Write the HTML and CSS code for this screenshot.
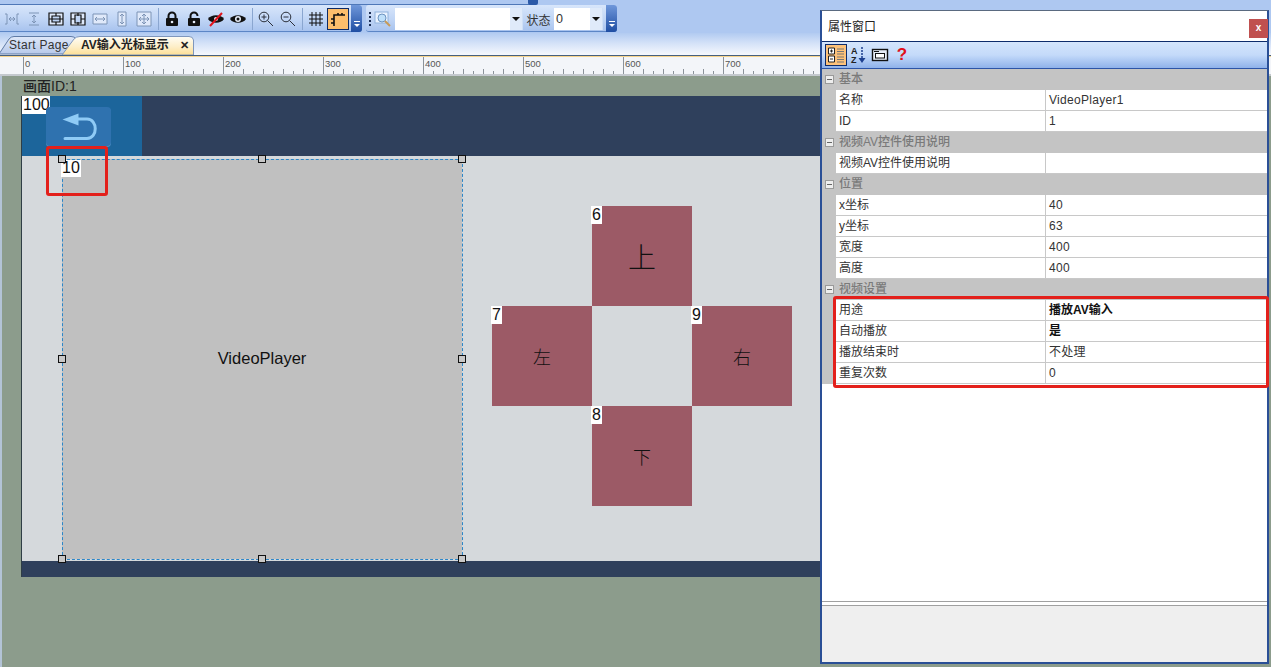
FILE: index.html
```html
<!DOCTYPE html>
<html lang="zh-CN">
<head>
<meta charset="utf-8">
<title>AV输入光标显示</title>
<link rel="stylesheet" href="styles.css">
</head>
<body>
<div class="app">
  <header class="toolbars">
    <div class="stub"><i class="stub-end"></i></div>
    <div class="bars">
      <div class="bar bar-main">
        <span class="slot"><svg class="ic faded" viewBox="0 0 16 16"><path d="M1 3h2v10H1M15 3h-2v10h2M5 8h6M5 8l2-2M5 8l2 2M11 8L9 6M11 8l-2 2"/></svg></span>
        <span class="slot"><svg class="ic faded" viewBox="0 0 16 16"><path d="M3 2h10M3 14h10M8 4v8M8 4L6 6M8 4l2 2M8 12l-2-2M8 12l2-2"/></svg></span>
        <span class="slot"><svg class="ic dark filled" viewBox="0 0 16 16"><path d="M1 2h14v12H1zM1 8h3M12 8h3M4 5h8v6H4zM8 2v3M8 11v3M4 8h8"/></svg></span>
        <span class="slot"><svg class="ic dark filled" viewBox="0 0 16 16"><path d="M1 2h14v12H1zM8 2v3M8 11v3M5 4v8h6V4zM1 8h4M11 8h4"/></svg></span>
        <span class="slot"><svg class="ic faded filled" viewBox="0 0 16 16"><path d="M1 3h14v10H1zM3 8h10M3 8l2-2M3 8l2 2M13 8l-2-2M13 8l-2 2"/></svg></span>
        <span class="slot"><svg class="ic faded filled" viewBox="0 0 16 16"><path d="M4 1h8v14H4zM8 3v10M8 3L6 5M8 3l2 2M8 13l-2-2M8 13l2-2"/></svg></span>
        <span class="slot"><svg class="ic faded filled" viewBox="0 0 16 16"><path d="M1 1h14v14H1zM8 3v10M3 8h10M8 3L6 5M8 3l2 2M8 13l-2-2M8 13l2-2M3 8l2-2M3 8l2 2M13 8l-2-2M13 8l-2 2"/></svg></span>
        <span class="sep"></span>
        <span class="slot"><svg class="ic solid" viewBox="0 0 16 16"><path class="hollow" d="M4.500 8V5a3.500 3.500 0 0 1 7 0v3"/><rect x="2" y="7" width="12" height="8" rx="1"/><circle class="pin" cx="8" cy="11" r="1.300"/></svg></span>
        <span class="slot"><svg class="ic solid" viewBox="0 0 16 16"><path class="hollow" d="M4.500 8V5a3.500 3.500 0 0 1 7 0"/><rect x="2" y="7" width="12" height="8" rx="1"/><circle class="pin" cx="8" cy="11" r="1.300"/></svg></span>
        <span class="slot"><svg class="ic solid" viewBox="0 0 16 16"><path d="M0 8c3-5 13-5 16 0-3 5-13 5-16 0z"/><circle class="pin" cx="8" cy="8" r="2"/><path class="slash" d="M2 15L14 2"/></svg></span>
        <span class="slot"><svg class="ic solid" viewBox="0 0 16 16"><path d="M0 8c3-5 13-5 16 0-3 5-13 5-16 0z"/><circle class="pin" cx="8" cy="8" r="3"/><circle cx="8" cy="8" r="1.500"/></svg></span>
        <span class="sep"></span>
        <span class="slot"><svg class="ic lens" viewBox="0 0 16 16"><circle cx="6" cy="6" r="4.800"/><path d="M3.500 6h5M6 3.500v5M9.500 9.500l5.500 5.500"/></svg></span>
        <span class="slot"><svg class="ic lens" viewBox="0 0 16 16"><circle cx="6" cy="6" r="4.800"/><path d="M3.500 6h5M9.500 9.500l5.500 5.500"/></svg></span>
        <span class="sep"></span>
        <span class="slot"><svg class="ic dark" viewBox="0 0 16 16"><path d="M4 1v14M8 1v14M12 1v14M1 4h14M1 8h14M1 12h14"/></svg></span>
        <span class="slot slot-on"><svg class="ic dark" viewBox="0 0 16 16"><path class="snap" d="M4 15V4h11M4 8H1M4 12H1M8 4V2M12 4V2"/></svg></span>
        <span class="chev"><i></i></span>
      </div>
      <div class="bar bar-find">
        <span class="grip"></span>
        <svg class="find-ic" viewBox="0 0 18 18"><rect x="1" y="2" width="13" height="11" fill="#eaf3ff" stroke="#8fb2dc"/><circle cx="8" cy="8" r="4" fill="#bfe0fa" stroke="#6d93c0"/><path d="M11 11l5 5" stroke="#c79a58" stroke-width="2"/></svg>
        <span class="combo combo-wide"><i class="drop"></i></span>
        <span class="state-label">状态</span>
        <span class="combo combo-state"><span class="combo-val">0</span><i class="drop"></i></span>
        <span class="chev chev-find"><i></i></span>
      </div>
    </div>
  </header>

  <nav class="tabs">
    <span class="tab tab-start">
      <svg class="tab-shape" viewBox="0 0 78 19"><defs><linearGradient id="tabBlue" x1="0" y1="0" x2="0" y2="1"><stop offset="0" stop-color="#dfe8f9"/><stop offset="1" stop-color="#b7c9ea"/></linearGradient></defs><path d="M0 18L10 3Q12 .5 15 .5H72Q76 .5 77 3L66 18z" fill="url(#tabBlue)" stroke="#5f7ba6"/></svg>
      <span class="tab-text">Start Page</span>
    </span>
    <span class="tab tab-active">
      <svg class="tab-shape" viewBox="0 0 132 19"><defs><linearGradient id="tabGold" x1="0" y1="0" x2="0" y2="1"><stop offset="0" stop-color="#fffdf6"/><stop offset=".55" stop-color="#fdeec8"/><stop offset="1" stop-color="#fddf95"/></linearGradient></defs><path d="M0 19L12 3Q14 .5 18 .5H127Q131 .5 131.500 4V19z" fill="url(#tabGold)" stroke="#7f97bd"/></svg>
      <span class="tab-text">AV输入光标显示</span>
      <b class="tab-x">✕</b>
    </span>
  </nav>

  <div class="ruler">
    <span>0</span><span>100</span><span>200</span><span>300</span><span>400</span><span>500</span><span>600</span><span>700</span><span>800</span>
  </div>

  <main class="canvas">
    <div class="screen-label">画面ID:1</div>
    <section class="screen">
      <div class="head"><div class="head-blue"></div></div>
      <div class="foot"></div>
      <span class="tag tag-100">100</span>
      <div class="back">
        <svg viewBox="0 0 38 30" class="back-ic"><path d="M18.500 1.500L2.500 7.500l16 6z" fill="#8fcbf6"/><path d="M17 7h10c11 0 11 19.500 0 19.500H5" fill="none" stroke="#8fcbf6" stroke-width="3" stroke-linecap="round"/></svg>
      </div>
      <div class="video">
        <span class="video-name">VideoPlayer</span>
        <span class="tag tag-10">10</span>
        <i class="h h-tl"></i><i class="h h-tc"></i><i class="h h-tr"></i>
        <i class="h h-ml"></i><i class="h h-mr"></i>
        <i class="h h-bl"></i><i class="h h-bc"></i><i class="h h-br"></i>
      </div>
      <div class="key key-up key-big"><span class="tag">6</span>上</div>
      <div class="key key-left"><span class="tag">7</span>左</div>
      <div class="key key-right"><span class="tag">9</span>右</div>
      <div class="key key-down"><span class="tag">8</span>下</div>
    </section>
    <div class="mark mark-canvas"></div>
  </main>

  <aside class="props">
    <div class="props-title"><span class="props-name">属性窗口</span><span class="close">x</span></div>
    <div class="props-tools">
      <span class="tool tool-on"><svg viewBox="0 0 18 18" class="tool-ic"><path d="M1.500 2h6v6h-6zM1.500 10h6v6h-6z" fill="#fff" stroke="#222"/><path d="M3 5h3M4.500 3.500v3M3 13h3" stroke="#222"/><path d="M10 3h7M10 5.500h7M10 8h7M10 11h7M10 13.500h7M10 16h7" stroke="#777"/></svg></span>
      <span class="tool"><svg viewBox="0 0 18 18" class="tool-ic"><text x="2" y="8" class="az">A</text><text x="2" y="17" class="az">Z</text><path d="M13 1v14" stroke="#1c3f8f" stroke-width="1.500" stroke-dasharray="2 1"/><path d="M9.500 12h7L13 17z" fill="#1c3f8f"/></svg></span>
      <span class="tool"><svg viewBox="0 0 18 18" class="tool-ic"><rect x="1.500" y="3.500" width="15" height="11" fill="#e8eef8" stroke="#111" stroke-width="1.400"/><rect x="4.500" y="7.500" width="9" height="4.500" fill="#fff" stroke="#111"/><path d="M3 5.500h5" stroke="#111"/></svg></span>
      <span class="tool help">?</span>
    </div>
    <div class="grid">
      <div class="group"><i class="minus"></i>基本</div>
      <div class="row"><span>名称</span><span class="val">VideoPlayer1</span></div>
      <div class="row"><span>ID</span><span class="val">1</span></div>
      <div class="group"><i class="minus"></i>视频AV控件使用说明</div>
      <div class="row"><span>视频AV控件使用说明</span><span class="val"></span></div>
      <div class="group"><i class="minus"></i>位置</div>
      <div class="row"><span>x坐标</span><span class="val">40</span></div>
      <div class="row"><span>y坐标</span><span class="val">63</span></div>
      <div class="row"><span>宽度</span><span class="val">400</span></div>
      <div class="row"><span>高度</span><span class="val">400</span></div>
      <div class="group"><i class="minus"></i>视频设置</div>
      <div class="row"><span>用途</span><span class="val strong">播放AV输入</span></div>
      <div class="row"><span>自动播放</span><span class="val strong">是</span></div>
      <div class="row"><span>播放结束时</span><span class="val">不处理</span></div>
      <div class="row"><span>重复次数</span><span class="val">0</span></div>
    </div>
    <div class="props-fill"></div>
    <div class="props-desc"></div>
  </aside>
  <div class="mark mark-props"></div>
</div>
</body>
</html>
```
FILE: styles.css
```css
* { box-sizing: border-box; }
html, body { margin: 0; height: 100%; overflow: hidden; }
body { font: 12px "Liberation Sans", "Noto Sans CJK SC", sans-serif; color: #222; }
.app { position: relative; width: 1271px; height: 667px; display: flex; flex-direction: column; overflow: hidden; background: #8c9c8c; }

/* top toolbars */
.toolbars { height: 33px; background: #aec8f1; flex: none; }
.stub { height: 5px; width: 530px; background: #aec8f1; border-bottom: 1px solid #4f78b8; position: relative; }
.stub-end { position: absolute; right: -8px; top: 0; width: 10px; height: 5px; background: #2c5aa8; border-radius: 0 0 2px 2px; }
.bars { display: flex; gap: 4px; height: 28px; }
.bar { display: flex; align-items: center; height: 27px; padding-top: 2px; background: linear-gradient(#d8e6fb, #c0d5f5 55%, #a8c3ee); border-bottom: 1px solid #5c86c6; border-radius: 0 3px 3px 0; }
.bar-main { width: 362px; padding-left: 1px; }
.bar-find { width: 251px; border-radius: 3px; padding-left: 3px; }
.slot { flex: none; width: 22px; height: 22px; display: flex; align-items: center; justify-content: center; }
.slot-on { background: #fdbe6c; border: 1px solid #0d2a66; }
.sep { flex: none; width: 6px; height: 22px; background: linear-gradient(#8aa6d0, #8aa6d0) center / 1px 100% no-repeat; }
.ic { width: 16px; height: 16px; fill: none; stroke-width: 1; }
.faded { stroke: #7d94b6; }
.dark { stroke: #111; }
.filled { fill: #dfe9fa; fill-rule: evenodd; stroke-width: 1.200; }
.faded.filled { stroke-width: 1; }
.lens { stroke: #2a2f3a; }
.snap { stroke-width: 1.600; }
.solid { fill: #111; stroke: none; }
.hollow { fill: none; stroke: #111; stroke-width: 2; }
.pin { fill: #e8eefa; }
.slash { stroke: #e0141c; stroke-width: 2; fill: none; }
.chev { margin: -2px 0 0 2px; flex: none; width: 11px; height: 27px; background: linear-gradient(#6f97da, #1f4ea3); border-radius: 0 3px 3px 0; position: relative; }
.chev i { position: absolute; left: 3px; bottom: 5px; width: 6px; height: 6px; border-top: 1px solid #fff; }
.chev i::after { content: ""; position: absolute; left: 0; top: 2px; border: 3px solid transparent; border-top-color: #fff; border-bottom: 0; }
.chev-find { margin-left: 3px; }
.grip { flex: none; width: 2px; height: 15px; margin-right: 3px; background: repeating-linear-gradient(#1d2f55 0 2px, transparent 2px 4px); }
.find-ic { flex: none; width: 18px; height: 18px; margin-right: 3px; }
.combo { flex: none; height: 22px; background: #fff; position: relative; display: block; }
.combo-wide { width: 128px; }
.combo-state { width: 49px; }
.combo-val { position: absolute; left: 2px; top: 4px; font-size: 12.500px; color: #333; }
.drop { position: absolute; right: 0; top: 0; width: 13px; height: 22px; background: #dfeafa; border-right: 1px solid #cfe0f6; }
.drop::after { content: ""; position: absolute; left: 2px; top: 9px; border: 4px solid transparent; border-top-color: #111; border-bottom: 0; }
.state-label { flex: none; width: 31px; text-align: center; color: #333; }

/* tabs */
.tabs { height: 23px; flex: none; display: flex; align-items: flex-end; background: linear-gradient(#b2cbf1, #d3e1f8 45%, #f6f8fd); border-bottom: 1px solid #46607f; position: relative; }
.tab { display: block; height: 19px; line-height: 18px; white-space: nowrap; position: relative; flex: none; }
.tab-shape { position: absolute; left: 0; top: 0; width: 100%; height: 19px; display: block; }
.tab-text { position: relative; }
.tab-start { width: 78px; margin-left: -1px; padding-left: 10px; color: #333; letter-spacing: .3px; }
.tab-active { width: 132px; margin-left: -15px; padding-left: 19px; font-weight: 700; color: #222; }
.tab-x { position: absolute; right: 5px; top: 0; font-size: 11px; font-weight: 700; }

/* ruler */
.ruler { height: 20px; flex: none; display: flex; padding-left: 23px; font-size: 9.500px; color: #555; border-top: 1px solid #f8d48c; border-bottom: 2px solid #c4c9ce; overflow: hidden;
  background-color: #f3f5f9;
  background-image:
    repeating-linear-gradient(90deg, #8b929a 0 1px, transparent 1px 100px),
    repeating-linear-gradient(90deg, #8b929a 0 1px, transparent 1px 20px),
    repeating-linear-gradient(90deg, #8b929a 0 1px, transparent 1px 10px);
  background-size: 100% 17px, 100% 5px, 100% 3px;
  background-position: 23px 0, 23px 12px, 23px 14px;
  background-repeat: no-repeat; }
.ruler span { flex: none; width: 100px; padding: 1px 0 0 2px; line-height: 12px; }

/* canvas */
.canvas { flex: 1; position: relative; background: #8c9c8c; border-left: 2px solid #b3c3d6; }
.screen-label { position: absolute; left: 21px; top: 2px; font-size: 14px; font-weight: 500; line-height: 16px; color: #222; }
.screen { position: absolute; left: 20px; top: 20px; width: 1020px; height: 481px; background-color: #d5d9dc; box-shadow: -1px 0 0 #2f3e46; }
.head { height: 60px; background: #2f405c; }
.head-blue { width: 120px; height: 60px; background: #1c659b; }
.foot { position: absolute; left: 0; right: 0; bottom: 0; height: 16px; background: #2f405c; }
.tag { position: absolute; left: -1px; top: 0; background: #fff; color: #111; font-size: 16px; line-height: 18px; padding: 0 1px; }
.tag-100 { left: 0; width: 28px; }
.back { position: absolute; left: 24px; top: 11px; width: 65px; height: 39px; background: #2f72af; border-radius: 4px; display: flex; align-items: center; justify-content: center; box-shadow: 0 1px 0 #4d8fc6; }
.back-ic { width: 38px; height: 30px; }
.video { position: absolute; left: 40px; top: 63px; width: 400px; height: 400px; background: #c0c0c0; display: flex; align-items: center; justify-content: center; padding-bottom: 2px; font-size: 16.500px; color: #111; }
.video::before { content: ""; box-sizing: border-box; position: absolute; left: 0; top: 0; width: 401px; height: 401px; border: 1px dashed #2b86c8; }
.video-name { position: relative; }
.tag-10 { left: -1px; top: 1px; width: 20px; height: 17px; line-height: 16px; text-align: center; }
.h { position: absolute; width: 8px; height: 8px; background: #c8c8c8; border: 1px solid #111; margin: -4px 0 0 -4px; }
.h-tl { left: 0; top: 0; }
.h-tc { left: 50%; top: 0; }
.h-tr { left: 100%; top: 0; }
.h-ml { left: 0; top: 50%; }
.h-mr { left: 100%; top: 50%; }
.h-bl { left: 0; top: 100%; }
.h-bc { left: 50%; top: 100%; }
.h-br { left: 100%; top: 100%; }
.key { position: absolute; width: 100px; height: 100px; background: #9c5a66; display: flex; align-items: center; justify-content: center; font: 300 18px "Noto Sans CJK SC", sans-serif; color: #111; }
.key .tag { font-family: "Liberation Sans", sans-serif; font-weight: 400; width: 11px; padding: 0; text-align: center; }
.key-big { font-size: 28px; }
.key-up { left: 570px; top: 110px; }
.key-left { left: 470px; top: 210px; }
.key-right { left: 670px; top: 210px; }
.key-down { left: 570px; top: 310px; }

/* red marks */
.mark { position: absolute; border: 3px solid #e3201b; border-radius: 3px; pointer-events: none; }
.mark-canvas { left: 44px; top: 70px; width: 62px; height: 50px; }
.mark-props { left: 833px; top: 296px; width: 436px; height: 92px; }

/* property window */
.props { position: absolute; left: 820px; top: 10px; width: 449px; height: 654px; background: #fff; border: 2px solid #2a4f96; border-top: 1px solid #5a6a80; display: flex; flex-direction: column; font-size: 12px; }
.props-title { height: 30px; flex: none; display: flex; align-items: center; justify-content: space-between; padding: 0 0 0 6px; color: #222; }
.props-name { margin-top: -2px; }
.close { width: 19px; height: 19px; margin: 4px -1px 0 0; background: #c0504f; color: #fff; font-size: 10px; font-weight: 700; text-align: center; line-height: 17px; }
.props-tools { height: 28px; flex: none; display: flex; align-items: center; padding-left: 3px; background: linear-gradient(#d4e5fc, #c4dafa 50%, #8fb2ea); border-top: 1px solid #0e2c6b; border-bottom: 1px solid #2c54a6; }
.tool { flex: none; width: 22px; height: 22px; display: flex; align-items: center; justify-content: center; }
.tool-on { background: #fdc27a; border: 1px solid #0e2c6b; }
.tool-ic { width: 18px; height: 18px; }
.az { font: 700 9px "Liberation Sans", sans-serif; fill: #222; }
.help { font-size: 17px; font-weight: 700; color: #e0101a; }
.grid { flex: none; background: #c4c4c4; }
.group { height: 21px; line-height: 20px; padding-left: 17px; color: #7a7a7a; position: relative; font-weight: 500; }
.minus { position: absolute; left: 3px; top: 6px; width: 9px; height: 9px; background: #eee; border: 1px solid #9a9a9a; }
.minus::after { content: ""; position: absolute; left: 1px; top: 3px; width: 5px; height: 1px; background: #666; }
.row { margin-left: 14px; height: 21px; display: grid; grid-template-columns: 209px 1fr; background: #fff; border-bottom: 1px solid #c8c8c8; line-height: 20px; color: #333; }
.row span { padding-left: 3px; white-space: nowrap; }
.row .val { border-left: 1px solid #c8c8c8; letter-spacing: .3px; }
.row .strong { font-weight: 700; color: #111; letter-spacing: 0; }
.props-fill { flex: 1; background: #fff; }
.props-desc { height: 57px; flex: none; background: #efefef; border-top: 1px solid #a0a0a0; box-shadow: 0 -3px 0 #fff, 0 -4px 0 #a0a0a0; }
```
